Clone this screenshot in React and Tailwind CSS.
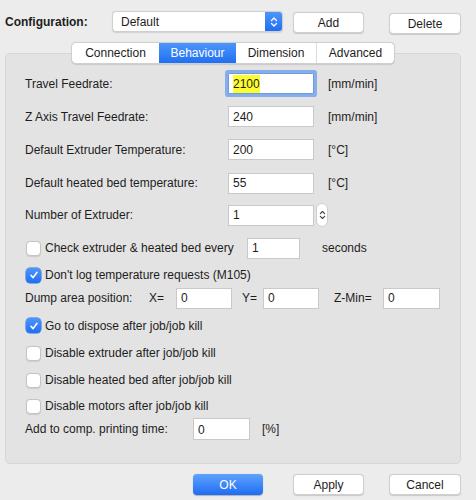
import React from 'react';

const font = { fontFamily: '"Liberation Sans", Arial, sans-serif' };

// small up/down caret pair used in select + stepper
const Carets = ({ color = 'white', w = 8, h = 12 }) => (
  <svg width={w} height={h} viewBox="0 0 8 12" fill="none">
    <path d="M1.5 4.5 L4 2 L6.5 4.5" stroke={color} strokeWidth="1.3" strokeLinecap="round" strokeLinejoin="round" />
    <path d="M1.5 7.5 L4 10 L6.5 7.5" stroke={color} strokeWidth="1.3" strokeLinecap="round" strokeLinejoin="round" />
  </svg>
);

const Field = ({ value, className = '', children }) => (
  <div className={`h-[21px] bg-white border border-[#c9c9c9] flex items-center pl-[4px] text-[12px] text-[#1d1d1d] ${className}`}>
    {children || value}
  </div>
);

const Check = ({ checked }) =>
  checked ? (
    <div className="w-[15px] h-[15px] rounded-[4px] bg-gradient-to-b from-[#4d95fb] to-[#1f6ff3] flex items-center justify-center shadow-[0_0_0_0.5px_#2a6fe0]">
      <svg width="10" height="10" viewBox="0 0 10 10" fill="none">
        <path d="M2 5.3 L4.1 7.6 L8 2.3" stroke="white" strokeWidth="1.6" strokeLinecap="round" strokeLinejoin="round" />
      </svg>
    </div>
  ) : (
    <div className="w-[15px] h-[15px] rounded-[4px] bg-white border border-[#c4c4c4] shadow-[0_0.5px_1px_rgba(0,0,0,0.1)]" />
  );

const Button = ({ children, className = '' }) => (
  <div className={`h-[21px] rounded-[4px] bg-white border border-[#cfcfcf] shadow-[0_0.5px_1px_rgba(0,0,0,0.15)] flex items-center justify-center text-[12px] text-[#1d1d1d] ${className}`}>
    {children}
  </div>
);

const FieldRow = ({ label, value, unit, h, focused, stepper }) => (
  <div className={`flex items-center ${h}`}>
    <div className="w-[203px]">{label}</div>
    {focused ? (
      <div className="w-[86px] h-[21px] bg-white border border-[#6f9be0] ring-[3px] ring-[#86aeea] rounded-[1px] flex items-center pl-[4px]">
        <span className="bg-[#fdfd2e]">{value}</span>
      </div>
    ) : (
      <Field value={value} className="w-[86px]" />
    )}
    {stepper && (
      <div className="ml-[2px] w-[12px] h-[24px] rounded-full bg-white border border-[#cfcfcf] flex items-center justify-center">
        <Carets color="#444" w={7} h={14} />
      </div>
    )}
    {unit && <div className="ml-[14px]">{unit}</div>}
  </div>
);

const CheckRow = ({ checked, label, h }) => (
  <div className={`flex items-center ${h}`}>
    <div className="ml-[1px]"><Check checked={checked} /></div>
    <div className="ml-[4px]">{label}</div>
  </div>
);

const App = () => {
  const tabs = [
    { name: 'Connection', w: 'w-[87px]' },
    { name: 'Behaviour', w: 'w-[77px]', active: true },
    { name: 'Dimension', w: 'w-[80px]' },
    { name: 'Advanced', w: 'w-[78px]' },
  ];

  return (
    <div style={font} className="w-[476px] h-[500px] bg-[#ececec] text-[12px] text-[#1d1d1d] overflow-hidden">
      {/* Top configuration row */}
      <div className="flex items-start pt-[11px] pl-[5px]">
        <div className="w-[107px] h-[21px] flex items-center font-bold">Configuration:</div>
        <div className="w-[171px] h-[21px] rounded-[4px] bg-white border border-[#cfcfcf] shadow-[0_0.5px_1px_rgba(0,0,0,0.12)] flex items-center overflow-hidden">
          <div className="flex-1 pl-[8px]">Default</div>
          <div className="w-[17px] h-full bg-gradient-to-b from-[#4d95fb] to-[#1f6ff3] flex items-center justify-center">
            <Carets />
          </div>
        </div>
        <Button className="ml-[10px] mt-[1px] w-[71px]">Add</Button>
        <Button className="ml-[25px] mt-[2px] w-[72px]">Delete</Button>
      </div>

      {/* Tabs */}
      <div className="relative z-10 flex justify-center mt-[8px] pr-[10px]">
        <div className="flex h-[22px] rounded-[5px] bg-white border border-[#cfcfcf] shadow-[0_0.5px_1px_rgba(0,0,0,0.12)] overflow-hidden">
          {tabs.map((t, i) => (
            <div
              key={t.name}
              className={`${t.w} flex items-center justify-center ${
                t.active
                  ? 'bg-gradient-to-b from-[#4d95fb] to-[#1f6ff3] text-white'
                  : 'text-[#1d1d1d]'
              } ${i > 0 && !t.active && !tabs[i - 1].active ? 'border-l border-[#dcdcdc]' : ''}`}
            >
              {t.name}
            </div>
          ))}
        </div>
      </div>

      {/* Panel */}
      <div className="mx-[5px] w-[456px] h-[411px] -mt-[11px] rounded-[5px] bg-[#e3e3e3] border border-[#d6d6d6] pt-[13px] pl-[19px]">
        <FieldRow label="Travel Feedrate:" value="2100" unit="[mm/min]" h="h-[33px]" focused />
        <FieldRow label="Z Axis Travel Feedrate:" value="240" unit="[mm/min]" h="h-[33px]" />
        <FieldRow label="Default Extruder Temperature:" value="200" unit="[°C]" h="h-[33px]" />
        <FieldRow label="Default heated bed temperature:" value="55" unit="[°C]" h="h-[34px]" />
        <FieldRow label="Number of Extruder:" value="1" h="h-[30px]" stepper />

        <div className="flex items-center h-[36px]">
          <div className="w-[222px] flex items-center">
            <div className="ml-[1px]"><Check /></div>
            <div className="ml-[4px]">Check extruder &amp; heated bed every</div>
          </div>
          <Field value="1" className="w-[53px]" />
          <div className="ml-[22px]">seconds</div>
        </div>

        <CheckRow checked label="Don't log temperature requests (M105)" h="h-[18px]" />

        <div className="flex items-center h-[28px]">
          <div className="w-[124px]">Dump area position:</div>
          <div className="w-[27px]">X=</div>
          <Field value="0" className="w-[56px]" />
          <div className="ml-[10px] w-[21px]">Y=</div>
          <Field value="0" className="w-[56px]" />
          <div className="ml-[15px] w-[49px]">Z-Min=</div>
          <Field value="0" className="w-[57px]" />
        </div>

        <CheckRow checked label="Go to dispose after job/job kill" h="h-[27px]" />
        <CheckRow label="Disable extruder after job/job kill" h="h-[28px]" />
        <CheckRow label="Disable heated bed after job/job kill" h="h-[26px]" />
        <CheckRow label="Disable motors after job/job kill" h="h-[26px]" />

        <div className="flex items-center h-[20px]">
          <div className="w-[168px]">Add to comp. printing time:</div>
          <div className="w-[57px] h-[22px] bg-white border border-[#c9c9c9] pl-[4px] pt-[2px]">0</div>
          <div className="ml-[12px]">[%]</div>
        </div>
      </div>

      {/* Bottom buttons */}
      <div className="flex mt-[10px] pl-[193px]">
        <div className="w-[70px] h-[21px] rounded-[4px] bg-gradient-to-b from-[#5ea2fc] to-[#1e6cf3] shadow-[0_0.5px_1px_rgba(0,0,0,0.25)] flex items-center justify-center text-white">
          OK
        </div>
        <Button className="ml-[30px] w-[71px]">Apply</Button>
        <Button className="ml-[25px] w-[72px]">Cancel</Button>
      </div>
    </div>
  );
};

export default App;
